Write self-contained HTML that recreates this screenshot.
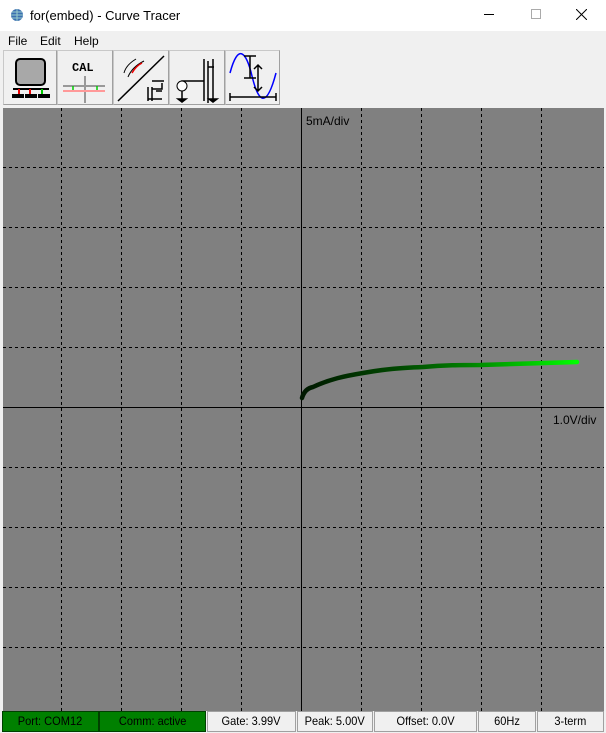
<!DOCTYPE html>
<html><head><style>
*{margin:0;padding:0;box-sizing:border-box}
body{width:606px;height:733px;background:#f0f0f0;font-family:"Liberation Sans",sans-serif;position:relative;overflow:hidden}
.t{position:absolute;left:0;top:0;width:606px;height:31px;background:#fff}
.abs{position:absolute}
.sb{position:absolute;top:711px;height:21px;font-size:12px;text-align:center;line-height:19px;border:1px solid #a0a0a0;background:#f0f0f0;color:#000}
.sb span{display:inline-block;transform:scaleX(0.92)}
.g{background:#008000;color:#000;border:1px solid #004000}
.btn{position:absolute;top:50px;height:55px;border:1px solid #c8c8c8;border-right-color:#a0a0a0;border-bottom-color:#a0a0a0;background:#f0f0f0}
</style></head><body>
<div class="t">
<svg class="abs" style="left:10px;top:8px" width="14" height="14"><circle cx="7" cy="7" r="6" fill="#3b6fb0"/><path d="M1 7h12M7 1v12M2 4h10M2 10h10" stroke="#9cc" stroke-width="1"/></svg>
<div class="abs" style="left:30px;top:8px;font-size:13px">for(embed) - Curve Tracer</div>
<div class="abs" style="left:484px;top:14px;width:10px;height:1px;background:#000"></div>
<div class="abs" style="left:531px;top:9px;width:10px;height:10px;border:1px solid #aaa"></div>
<svg class="abs" style="left:576px;top:9px" width="11" height="11"><path d="M0 0L11 11M11 0L0 11" stroke="#000"/></svg>
</div>
<div class="abs" style="left:8px;top:34px;font-size:12px">File</div>
<div class="abs" style="left:40px;top:34px;font-size:12px">Edit</div>
<div class="abs" style="left:74px;top:34px;font-size:12px">Help</div>

<div class="btn" style="left:3px;width:54px"><svg width="52" height="53"><rect x="12" y="8" width="29" height="26" rx="4" fill="#a8a8a8" stroke="#000" stroke-width="2"/><path d="M9 38h36M15 38v6M26 38v6M38 38v6" stroke="#000" stroke-width="2"/><path d="M15 38v6" stroke="#e00" stroke-width="2"/><path d="M26 38v6" stroke="#e00" stroke-width="2"/><path d="M38 38v6" stroke="#0c0" stroke-width="2"/><rect x="8" y="43" width="12" height="4" fill="#000"/><rect x="21" y="43" width="12" height="4" fill="#000"/><rect x="34" y="43" width="12" height="4" fill="#000"/></svg></div>
<div class="btn" style="left:57px;width:56px"><svg width="54" height="53"><text x="14" y="20" font-family="Liberation Mono" font-weight="bold" font-size="12">CAL</text><path d="M27 25v27" stroke="#999" stroke-width="2"/><path d="M5 35h42" stroke="#999" stroke-width="2"/><path d="M5 40h42" stroke="#f99" stroke-width="2"/><path d="M15 35v4M39 35v4" stroke="#0c0" stroke-width="1.5"/></svg></div>
<div class="btn" style="left:113px;width:56px"><svg width="54" height="53"><path d="M4 50L50 5" stroke="#000" stroke-width="1.5"/><path d="M10 22Q12 14 22 8M14 26Q18 16 30 10" stroke="#000" fill="none"/><path d="M18 22Q22 15 28 12" stroke="#e00" fill="none" stroke-width="1.5"/><path d="M38 30h12M34 36v14M38 36v14M34 48h14M38 38h10v-6M42 40h6" stroke="#000" stroke-width="1.5" fill="none"/></svg></div>
<div class="btn" style="left:169px;width:56px"><svg width="54" height="53"><path d="M12 40v-10h22v-20M38 10v42M34 8v42" stroke="#000" stroke-width="1.5" fill="none"/><circle cx="12" cy="35" r="5" fill="#fff" stroke="#000"/><path d="M12 40v8M8 48h8l-4 3z M43 8v40M39 48h8l-4 3z M38 16h6" stroke="#000" stroke-width="1.5"/></svg></div>
<div class="btn" style="left:225px;width:55px"><svg width="53" height="53"><path d="M4 22C12 -8 20 0 26 25S40 60 50 22" stroke="#00f" stroke-width="1.5" fill="none"/><path d="M18 5h12M24 5v22M18 27h12M32 14v26M28 18l4-4 4 4M28 36l4 4 4-4M4 46h46M4 42v8M50 42v8" stroke="#000" stroke-width="1.5" fill="none"/></svg></div>

<svg class="abs" style="left:0;top:106px" width="606" height="605">
<rect x="3" y="2" width="601" height="603" fill="#808080"/>
<g stroke="#000" stroke-width="1" stroke-dasharray="3,3">
<path d="M61.5 2v603M121.5 2v603M181.5 2v603M241.5 2v603M361.5 2v603M421.5 2v603M481.5 2v603M541.5 2v603"/>
<path d="M3 61.5h601M3 121.5h601M3 181.5h601M3 241.5h601M3 361.5h601M3 421.5h601M3 481.5h601M3 541.5h601"/>
</g>
<path d="M301.5 2v603M3 301.5h601" stroke="#000"/>
<text x="306" y="19" font-size="12" font-family="Liberation Sans" fill="#000">5mA/div</text>
<text x="553" y="318" font-size="12" font-family="Liberation Sans" fill="#000">1.0V/div</text>
<defs><linearGradient id="c" x1="302" x2="578" gradientUnits="userSpaceOnUse"><stop offset="0" stop-color="#001800"/><stop offset="0.35" stop-color="#004800"/><stop offset="0.6" stop-color="#008000"/><stop offset="0.8" stop-color="#00c000"/><stop offset="1" stop-color="#00ff00"/></linearGradient></defs>
<path d="M302 292C304 285 308 282 313 281C330 273 345 270 363 267C385 263 400 262 423 261C445 259 460 259 480 259C510 258 540 257 577 256" stroke="url(#c)" stroke-width="4.5" fill="none" stroke-linecap="round"/>
</svg>

<div class="sb g" style="left:2px;width:97px"><span>Port: COM12</span></div>
<div class="sb g" style="left:99px;width:107px"><span>Comm: active</span></div>
<div class="sb" style="left:207px;width:89px"><span>Gate: 3.99V</span></div>
<div class="sb" style="left:297px;width:76px"><span>Peak: 5.00V</span></div>
<div class="sb" style="left:374px;width:103px"><span>Offset: 0.0V</span></div>
<div class="sb" style="left:478px;width:58px"><span>60Hz</span></div>
<div class="sb" style="left:537px;width:67px"><span>3-term</span></div>
</body></html>
